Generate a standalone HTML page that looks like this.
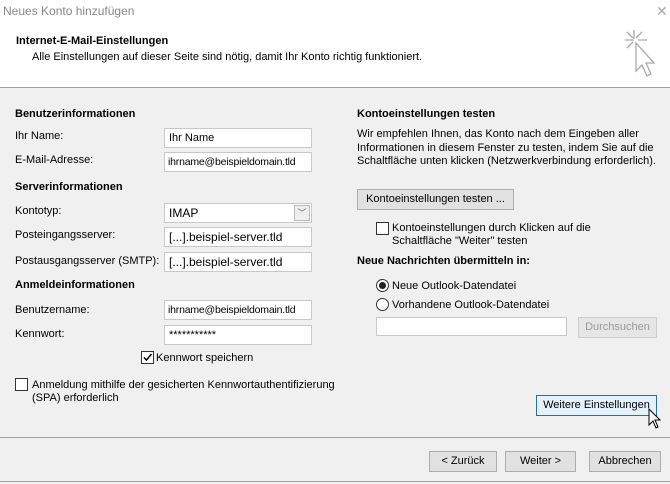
<!DOCTYPE html>
<html><head><meta charset="utf-8"><style>
*{margin:0;padding:0;box-sizing:border-box}
body{width:670px;height:484px;background:#f0f0f0;font-family:"Liberation Sans",sans-serif;font-size:11px;color:#000;position:relative;overflow:hidden}
.a{position:absolute;white-space:nowrap}
.b{font-weight:bold}
.in{position:absolute;background:#fff;border:1px solid #c8c8c8;height:20px;padding:3px 4px;font-size:11px;white-space:nowrap;overflow:hidden}
.btn{position:absolute;background:#e1e1e1;border:1px solid #adadad;height:21px;text-align:center;line-height:19px;font-size:11px}
.cb{position:absolute;width:13px;height:13px;border:1px solid #333;background:#fff}
.rd{position:absolute;width:13px;height:13px;border:1px solid #333;border-radius:50%;background:#fff}
</style></head><body>
<div class="a" style="left:0;top:0;width:670px;height:88px;background:#fff"></div>
<div class="a" style="left:0;top:87px;width:670px;height:1px;background:#a0a0a0"></div>
<div class="a" style="left:3px;top:4px;color:#888;font-size:12px">Neues Konto hinzufügen</div>
<div class="a" style="left:656px;top:3px;color:#aaa;font-size:14px">✕</div>
<div class="a b" style="left:16px;top:35px">Internet-E-Mail-Einstellungen</div>
<div class="a" style="left:32px;top:51px">Alle Einstellungen auf dieser Seite sind nötig, damit Ihr Konto richtig funktioniert.</div>
<svg class="a" style="left:622px;top:28px" width="40" height="52" viewBox="0 0 40 52"><g stroke="#aaa" stroke-width="1.3" fill="none"><path d="M12 2v9M3 12h9M16 12h9M5 4l6 6M20 4l-6 6M5 20l6-6"/><path d="M14 15l0 28 6-6 5 11 4-2-5-11 8 0z" fill="#fff"/></g></svg>

<div class="a b" style="left:15px;top:108px">Benutzerinformationen</div>
<div class="a" style="left:15px;top:130px">Ihr Name:</div>
<div class="in" style="left:164px;top:128px;width:148px">Ihr Name</div>
<div class="a" style="left:15px;top:154px">E-Mail-Adresse:</div>
<div class="in" style="left:164px;top:152px;width:148px;font-size:10.5px;letter-spacing:-0.2px;padding-left:3px">ihrname@beispieldomain.tld</div>
<div class="a b" style="left:15px;top:181px">Serverinformationen</div>
<div class="a" style="left:15px;top:205px">Kontotyp:</div>
<div class="in" style="left:164px;top:203px;width:148px;font-size:12px;padding-top:2px">IMAP</div>
<div class="a" style="left:294px;top:205px;width:16px;height:16px;border:1px solid #bbb;background:#eee;color:#666;font-size:9px;text-align:center;line-height:14px">﹀</div>
<div class="a" style="left:15px;top:229px">Posteingangsserver:</div>
<div class="in" style="left:164px;top:227px;width:148px;font-size:12px;padding-top:2px">[...].beispiel-server.tld</div>
<div class="a" style="left:15px;top:255px">Postausgangsserver (SMTP):</div>
<div class="in" style="left:164px;top:252px;width:148px;font-size:12px;padding-top:2px">[...].beispiel-server.tld</div>
<div class="a b" style="left:15px;top:279px">Anmeldeinformationen</div>
<div class="a" style="left:15px;top:304px">Benutzername:</div>
<div class="in" style="left:164px;top:300px;width:148px;font-size:10.5px;letter-spacing:-0.2px;padding-left:3px">ihrname@beispieldomain.tld</div>
<div class="a" style="left:15px;top:328px">Kennwort:</div>
<div class="in" style="left:164px;top:325px;width:148px">***********</div>
<div class="cb" style="left:141px;top:351px"><svg width="11" height="11" viewBox="0 0 11 11" style="display:block"><path d="M2 5.5l2.5 2.5 5-6" stroke="#000" stroke-width="1.5" fill="none"/></svg></div>
<div class="a" style="left:156px;top:352px">Kennwort speichern</div>
<div class="cb" style="left:15px;top:378px"></div>
<div class="a" style="left:32px;top:379px;line-height:13px">Anmeldung mithilfe der gesicherten Kennwortauthentifizierung<br>(SPA) erforderlich</div>

<div class="a b" style="left:357px;top:108px">Kontoeinstellungen testen</div>
<div class="a" style="left:357px;top:128px;line-height:13.5px">Wir empfehlen Ihnen, das Konto nach dem Eingeben aller<br>Informationen in diesem Fenster zu testen, indem Sie auf die<br>Schaltfläche unten klicken (Netzwerkverbindung erforderlich).</div>
<div class="btn" style="left:357px;top:189px;width:157px">Kontoeinstellungen testen ...</div>
<div class="cb" style="left:376px;top:222px"></div>
<div class="a" style="left:392px;top:222px;line-height:13px">Kontoeinstellungen durch Klicken auf die<br>Schaltfläche "Weiter" testen</div>
<div class="a b" style="left:357px;top:255px">Neue Nachrichten übermitteln in:</div>
<div class="rd" style="left:376px;top:279px"><div style="width:7px;height:7px;border-radius:50%;background:#222;margin:2px"></div></div>
<div class="a" style="left:392px;top:280px">Neue Outlook-Datendatei</div>
<div class="rd" style="left:376px;top:298px"></div>
<div class="a" style="left:392px;top:299px">Vorhandene Outlook-Datendatei</div>
<div class="in" style="left:376px;top:317px;width:191px;height:19px"></div>
<div class="btn" style="left:578px;top:317px;width:79px;color:#999;border-color:#ccc;background:#e6e6e6">Durchsuchen</div>
<div class="btn" style="left:536px;top:395px;width:121px;background:#e5f1fb;border-color:#0078d7">Weitere Einstellungen</div>
<svg class="a" style="left:648px;top:408px" width="14" height="22" viewBox="0 0 14 22"><path d="M1 1v16l4-4 3 7 2-1-3-7h5z" fill="#fff" stroke="#000" stroke-width="1"/></svg>

<div class="a" style="left:0;top:437px;width:670px;height:1px;background:#a0a0a0"></div>
<div class="btn" style="left:429px;top:451px;width:68px">&lt; Zurück</div>
<div class="btn" style="left:505px;top:451px;width:71px">Weiter &gt;</div>
<div class="btn" style="left:589px;top:451px;width:72px">Abbrechen</div>
<div class="a" style="left:0;top:481px;width:670px;height:1px;background:#a0a0a0"></div>
</body></html>
